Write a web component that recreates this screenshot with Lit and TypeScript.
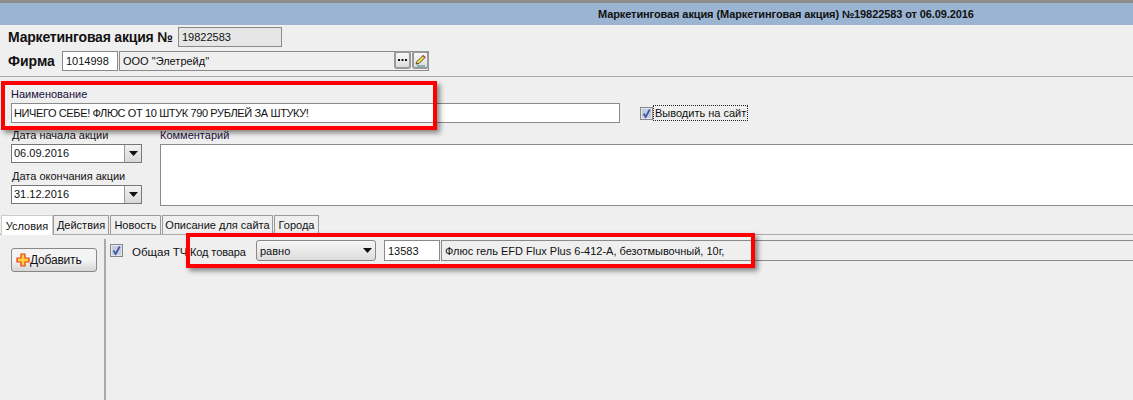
import { LitElement, html, css } from "lit";
import { customElement } from "lit/decorators.js";

const check = html`<svg class="chk" width="13" height="13" viewBox="0 0 13 13"><rect x=".5" y=".5" width="12" height="12" fill="#e4e6ec" stroke="#85888f"/><rect x="2" y="2" width="9" height="9" fill="#c6cddd"/><path d="M3.500 6.500 L5.600 10 L9.800 2.500" fill="none" stroke="#4258a8" stroke-width="1.800"/></svg>`;
const arrow = html`<svg width="9" height="5" viewBox="0 0 9 5"><path d="M0 0H9L4.500 5Z" fill="#111"/></svg>`;

@customElement("app-root")
export class AppRoot extends LitElement {
  static styles = css`
    :host { display: block; width: 1133px; height: 400px; overflow: hidden; position: relative; background: #efefef; font: 11px/14px "Liberation Sans", Arial, sans-serif; color: #111; }
    * { box-sizing: border-box; }
    .title { height: 25px; border-top: 3px solid #8c8c8c; background: #9ab4d2; display: flex; align-items: center; padding: 0 0 1px 598px; font-weight: 700; font-size: 11px; letter-spacing: -0.1px; }
    .head { height: 52px; padding: 2px 0 0 8px; border-bottom: 1px solid #aaa; display: flex; flex-direction: column; gap: 4px; }
    .row { display: flex; align-items: center; }
    .big { font-weight: 700; font-size: 14px; white-space: nowrap; }
    .l1 { width: 170px; letter-spacing: -0.2px; }
    .l2 { width: 54px; }
    .f { height: 20px; border: 1px solid #8a8a8a; padding: 0 3px; display: flex; align-items: center; white-space: nowrap; }
    .white { background: #fff; }
    .grey { background: #e6e6e6; }
    .num { width: 104px; }
    .code { width: 56px; }
    .firm { width: 310px; margin-left: 1px; padding-right: 0; background: #efefef; justify-content: space-between; }
    .btns { display: flex; gap: 1px; margin: -2px -1px 0 0; }
    .sq { width: 17px; height: 18px; border: 2px solid #999; border-radius: 3px; background: linear-gradient(#f8f8f8, #dcdcdc); display: flex; align-items: center; justify-content: center; }
    .name { padding: 10px 0 0 11px; height: 61px; }
    .name label { display: block; height: 16px; color: #1a1040; }
    .namef { width: 609px; letter-spacing: -0.38px; padding-left: 2px; }
    .show { margin-left: 20px; gap: 1px; }
    .show span { outline: 1px dotted #222; padding: 0 1px; }
    .mid { display: flex; padding-left: 11px; height: 76px; }
    .dates { width: 131px; display: flex; flex-direction: column; margin-top: -10px; }
    .dates label { height: 16px; padding-left: 1px; line-height: 14px; margin-top: 6px; }
    .dates label:first-child { margin-top: 0; }
    .combo { display: flex; height: 19px; width: 131px; border: 1px solid #777; background: #fff; }
    .combo b { flex: 1; font-weight: 400; padding-left: 2px; line-height: 17px; }
    .combo i { width: 17px; border-left: 1px solid #999; background: linear-gradient(#f2f2f2, #d8d8d8); display: flex; align-items: center; justify-content: center; }
    .comment { margin-left: 18px; flex: 1; margin-top: -10px; }
    .comment label { display: block; height: 16px; color: #1a1040; }
    .area { height: 62px; background: #fff; border: 1px solid #8a8a8a; border-right: 0; }
    .tabs { display: flex; height: 21px; padding-left: 1px; border-bottom: 1px solid #aaa; align-items: flex-end; }
    .tab { height: 19px; border: 1px solid #9a9a9a; border-bottom: 0; margin-right: 1px; line-height: 18px; background: #efefef; white-space: nowrap; text-align: center; }
    .t-a { width: 52px; height: 20px; background: #fff; border-color: #ccc; line-height: 20px; margin-right: 0; margin-bottom: -1px; }
    .t-b { width: 56px; }
    .t-c { width: 51px; }
    .t-d { width: 111px; }
    .t-e { width: 45px; }
    .body { display: flex; height: 165px; }
    .side { width: 106px; margin-top: 4px; border-right: 2px solid #aaa; padding: 9px 0 0 11px; }
    .add { width: 86px; height: 24px; border: 1px solid #888; border-radius: 3px; background: linear-gradient(#f4f4f4 50%, #d6d6d6); display: flex; align-items: center; padding-left: 4px; font-size: 12px; letter-spacing: -0.2px; }
    .cond { flex: 1; padding: 5px 0 0 4px; display: flex; align-items: flex-start; }
    .cond .chk { margin-top: 4px; }
    .t1 { margin: 5px 0 0 9px; width: 58px; white-space: nowrap; font-size: 11.500px; }
    .t2 { margin-top: 5px; width: 66px; white-space: nowrap; letter-spacing: -0.1px; }
    .sel { width: 120px; height: 21px; border: 1px solid #888; border-radius: 3px; background: linear-gradient(#f6f6f6, #dcdcdc); display: flex; align-items: center; justify-content: space-between; padding: 0 3px 0 3px; }
    .vals { display: flex; margin-left: 8px; flex: 1; }
    .vals .f { height: 21px; }
    .vals .c { width: 56px; }
    .vals .d { flex: 1; margin-left: 1px; background: #efefef; border-right: 0; }
    .red { position: absolute; border: 4px solid #f00; box-shadow: 3px 3px 5px rgba(0,0,0,.45); pointer-events: none; }
    .r1 { left: 1px; top: 81px; width: 436px; height: 49px; }
    .r2 { left: 186px; top: 233px; width: 569px; height: 35px; }
  `;

  render() {
    return html`
      <div class="title">Маркетинговая акция (Маркетинговая акция) №19822583 от 06.09.2016</div>
      <div class="head">
        <div class="row"><span class="big l1">Маркетинговая акция №</span><div class="f grey num">19822583</div></div>
        <div class="row">
          <span class="big l2">Фирма</span><div class="f white code">1014998</div>
          <div class="f firm"><span>ООО "Элетрейд"</span>
            <div class="btns">
              <div class="sq"><svg width="9" height="3" viewBox="0 0 9 3"><path d="M0 0h2v2H0zM3.500 0h2v2h-2zM7 0h2v2H7z" fill="#111"/></svg></div>
              <div class="sq"><svg width="13" height="13" viewBox="0 0 13 13"><path d="M2 10L3 7.500 9 1.500l2 2-6 6z" fill="#f4e04a" stroke="#222" stroke-width=".8"/><path d="M9 1.500l2 2" stroke="#d33" stroke-width="1.500"/><path d="M3 12h8" stroke="#2a8a8a"/></svg></div>
            </div>
          </div>
        </div>
      </div>
      <div class="name">
        <label>Наименование</label>
        <div class="row">
          <div class="f white namef">НИЧЕГО СЕБЕ! ФЛЮС ОТ 10 ШТУК 790 РУБЛЕЙ ЗА ШТУКУ!</div>
          <div class="row show">${check}<span>Выводить на сайт</span></div>
        </div>
      </div>
      <div class="mid">
        <div class="dates">
          <label>Дата начала акции</label>
          <div class="combo"><b>06.09.2016</b><i>${arrow}</i></div>
          <label>Дата окончания акции</label>
          <div class="combo"><b>31.12.2016</b><i>${arrow}</i></div>
        </div>
        <div class="comment"><label>Комментарий</label><div class="area"></div></div>
      </div>
      <div class="tabs">
        <div class="tab t-a">Условия</div><div class="tab t-b">Действия</div><div class="tab t-c">Новость</div><div class="tab t-d">Описание для сайта</div><div class="tab t-e">Города</div>
      </div>
      <div class="body">
        <div class="side">
          <div class="add"><svg width="14" height="14" viewBox="0 0 14 14"><path d="M5 1h4v4h4v4H9v4H5V9H1V5h4z" fill="#ffd23a" stroke="#e8381a" stroke-width="1.200"/></svg>Добавить</div>
        </div>
        <div class="cond">
          ${check}<span class="t1">Общая ТЧ</span><span class="t2">Код товара</span>
          <div class="sel"><span>равно</span>${arrow}</div>
          <div class="vals"><div class="f white c">13583</div><div class="f d">Флюс гель EFD Flux Plus 6-412-A, безотмывочный, 10г,</div></div>
        </div>
      </div>
      <div class="red r1"></div>
      <div class="red r2"></div>
    `;
  }
}
